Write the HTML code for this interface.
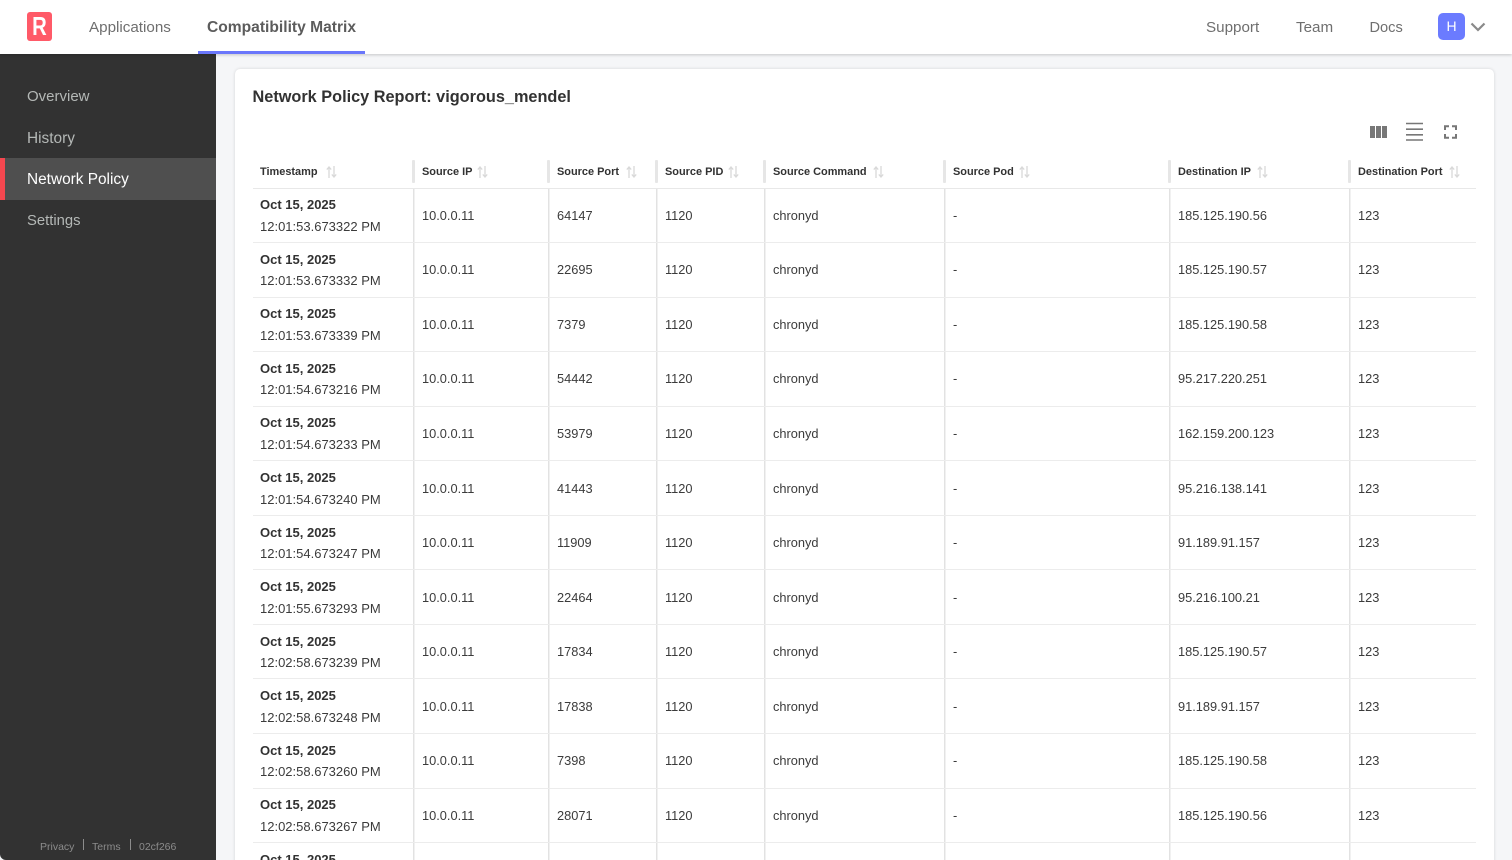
<!DOCTYPE html>
<html><head><meta charset="utf-8"><title>Network Policy</title>
<style>
*{box-sizing:border-box}
html,body{margin:0;padding:0;width:1512px;height:860px;overflow:hidden;background:#f5f6f8;font-family:"Liberation Sans",sans-serif}
#wrap{position:relative;width:1512px;height:860px;overflow:hidden;background:#f5f6f8}
.abs,.n{position:absolute}
#top{position:absolute;left:0;top:0;width:1512px;height:54px;background:#fff;box-shadow:0 1px 3px rgba(0,0,0,.2);z-index:5}
.n{top:18px;font-size:15.2px;line-height:20px;color:#6f6f6f;white-space:nowrap}
#side{position:absolute;left:0;top:54px;width:216px;height:806px;background:#323232;border-bottom-left-radius:6px;z-index:3}
.s{position:absolute;left:27px;font-size:15px;line-height:20px;color:#b4b8b6;white-space:nowrap}
#act{position:absolute;left:0;top:104px;width:216px;height:42px;background:#4f4f4f;border-left:5px solid #f4474f}
.f{position:absolute;top:786px;font-size:10.5px;line-height:14px;color:#8c8c8c;white-space:nowrap}
.fs{position:absolute;top:785px;width:1px;height:11px;background:#8c8c8c}
#card{position:absolute;left:235px;top:69px;width:1259px;height:800px;background:#fff;border-radius:5px;box-shadow:0 0 3px rgba(0,0,0,.14)}
h1{position:absolute;left:252.5px;top:87px;margin:0;font-size:16.3px;line-height:21px;font-weight:700;color:#323232;white-space:nowrap}
table{position:absolute;left:253px;top:155px;width:1223px;border-collapse:collapse;table-layout:fixed;color:#323232}
th{height:33px;padding:2px 0 0 7px;text-align:left;font-size:10.95px;font-weight:700;white-space:nowrap;position:relative;border-bottom:1px solid #e8e8e8;color:#323232;vertical-align:middle}
th+th{padding-left:9px}
th+th:before{content:"";position:absolute;left:-1px;top:5px;width:3px;height:23px;background:#e6e6e6;border-radius:1px}
th svg{margin-left:6px;vertical-align:-3px}
th:nth-child(1) svg{margin-left:8px}
th:nth-child(2) svg{margin-left:5px}
th:nth-child(3) svg{margin-left:7px}
th:nth-child(4) svg{margin-left:5px}
th:nth-child(6) svg{margin-left:5px}
th:nth-child(8) svg{margin-left:7px}
td{height:54.55px;padding:0 0 0 9px;font-size:12.8px;border-bottom:1px solid #ececec;color:#3b3b3b;vertical-align:middle;white-space:nowrap}
td+td{box-shadow:inset 1px 0 #e2e2e2,inset 2px 0 #f1f1f1}
td:first-child{padding-left:7px;font-size:13px;line-height:21.5px;padding-top:1px}
td b{color:#323232;display:block}
</style></head><body><div id="wrap">
<svg width="0" height="0" style="position:absolute"><symbol id="so" viewBox="0 0 11 12"><path d="M3 12V1.6M.8 3.6 3 1l2.2 2.6M8 0v10.4M5.8 8.4 8 11l2.2-2.6" fill="none" stroke="#d9d9d9" stroke-width="1.3"/></symbol></svg>
<div id="top">
<div class="abs" style="left:27px;top:12px;width:25px;height:29px;background:#ff5a68;border-radius:3px;color:#fff;font-weight:700;font-size:26px;line-height:29px;text-align:center"><span style="display:inline-block;transform:scaleX(.78)">R</span></div>
<div class="n" style="left:89px">Applications</div>
<div class="n" style="left:207px;font-weight:700;color:#5c5c5c;font-size:15.6px">Compatibility Matrix</div>
<div class="abs" style="left:198px;top:51px;width:167px;height:3px;background:#6a77fb"></div>
<div class="n" style="left:1206px">Support</div>
<div class="n" style="left:1296px">Team</div>
<div class="n" style="left:1369.5px;font-size:14.6px">Docs</div>
<div class="abs" style="left:1438px;top:13px;width:27px;height:27px;background:#6b7bff;border-radius:5px;color:#fff;font-size:14px;line-height:27px;text-align:center">H</div>
<svg class="abs" style="left:1470px;top:22px" width="16" height="10"><path d="M1.5 1.5 8 8l6.5-6.5" fill="none" stroke="#8a8a8a" stroke-width="2.2"/></svg>
</div>
<div id="side">
<div id="act"></div>
<div class="s" style="top:33px">Overview</div>
<div class="s" style="top:74.5px;font-size:15.4px">History</div>
<div class="s" style="top:116px;color:#fff;font-size:15.4px">Network Policy</div>
<div class="s" style="top:157px;font-size:14.8px">Settings</div>
<div class="f" style="left:40px">Privacy</div><div class="fs" style="left:83px"></div>
<div class="f" style="left:92px">Terms</div><div class="fs" style="left:130px"></div>
<div class="f" style="left:139px">02cf266</div>
</div>
<div id="card"></div>
<h1>Network Policy Report: vigorous_mendel</h1>
<svg class="abs" style="left:1370px;top:126px" width="17" height="12"><path d="M0 0h5v12H0zM6 0h5v12H6zM12 0h5v12h-5z" fill="#777"/></svg>
<svg class="abs" style="left:1406px;top:122px" width="17" height="19"><path d="M0 1.5h17M0 7.2h17M0 12.8h17M0 18h17" stroke="#777" stroke-width="1.6"/></svg>
<svg class="abs" style="left:1444px;top:125px" width="13" height="14"><path d="M1 5V1.2h4M8 1.2h4V5M12 9v3.8H8M5 12.8H1V9" fill="none" stroke="#777" stroke-width="2"/></svg>
<table>
<colgroup><col style="width:160px"><col style="width:135px"><col style="width:108px"><col style="width:108px"><col style="width:180px"><col style="width:225px"><col style="width:180px"><col style="width:127px"></colgroup>
<tr><th>Timestamp<svg width="11" height="12"><use href="#so"/></svg></th><th>Source IP<svg width="11" height="12"><use href="#so"/></svg></th><th>Source Port<svg width="11" height="12"><use href="#so"/></svg></th><th>Source PID<svg width="11" height="12"><use href="#so"/></svg></th><th>Source Command<svg width="11" height="12"><use href="#so"/></svg></th><th>Source Pod<svg width="11" height="12"><use href="#so"/></svg></th><th>Destination IP<svg width="11" height="12"><use href="#so"/></svg></th><th>Destination Port<svg width="11" height="12"><use href="#so"/></svg></th></tr>
<tr><td><b>Oct 15, 2025</b>12:01:53.673322 PM</td><td>10.0.0.11</td><td>64147</td><td>1120</td><td>chronyd</td><td>-</td><td>185.125.190.56</td><td>123</td></tr>
<tr><td><b>Oct 15, 2025</b>12:01:53.673332 PM</td><td>10.0.0.11</td><td>22695</td><td>1120</td><td>chronyd</td><td>-</td><td>185.125.190.57</td><td>123</td></tr>
<tr><td><b>Oct 15, 2025</b>12:01:53.673339 PM</td><td>10.0.0.11</td><td>7379</td><td>1120</td><td>chronyd</td><td>-</td><td>185.125.190.58</td><td>123</td></tr>
<tr><td><b>Oct 15, 2025</b>12:01:54.673216 PM</td><td>10.0.0.11</td><td>54442</td><td>1120</td><td>chronyd</td><td>-</td><td>95.217.220.251</td><td>123</td></tr>
<tr><td><b>Oct 15, 2025</b>12:01:54.673233 PM</td><td>10.0.0.11</td><td>53979</td><td>1120</td><td>chronyd</td><td>-</td><td>162.159.200.123</td><td>123</td></tr>
<tr><td><b>Oct 15, 2025</b>12:01:54.673240 PM</td><td>10.0.0.11</td><td>41443</td><td>1120</td><td>chronyd</td><td>-</td><td>95.216.138.141</td><td>123</td></tr>
<tr><td><b>Oct 15, 2025</b>12:01:54.673247 PM</td><td>10.0.0.11</td><td>11909</td><td>1120</td><td>chronyd</td><td>-</td><td>91.189.91.157</td><td>123</td></tr>
<tr><td><b>Oct 15, 2025</b>12:01:55.673293 PM</td><td>10.0.0.11</td><td>22464</td><td>1120</td><td>chronyd</td><td>-</td><td>95.216.100.21</td><td>123</td></tr>
<tr><td><b>Oct 15, 2025</b>12:02:58.673239 PM</td><td>10.0.0.11</td><td>17834</td><td>1120</td><td>chronyd</td><td>-</td><td>185.125.190.57</td><td>123</td></tr>
<tr><td><b>Oct 15, 2025</b>12:02:58.673248 PM</td><td>10.0.0.11</td><td>17838</td><td>1120</td><td>chronyd</td><td>-</td><td>91.189.91.157</td><td>123</td></tr>
<tr><td><b>Oct 15, 2025</b>12:02:58.673260 PM</td><td>10.0.0.11</td><td>7398</td><td>1120</td><td>chronyd</td><td>-</td><td>185.125.190.58</td><td>123</td></tr>
<tr><td><b>Oct 15, 2025</b>12:02:58.673267 PM</td><td>10.0.0.11</td><td>28071</td><td>1120</td><td>chronyd</td><td>-</td><td>185.125.190.56</td><td>123</td></tr>
<tr><td><b>Oct 15, 2025</b><br></td><td></td><td></td><td></td><td></td><td></td><td></td><td></td></tr>
</table>
</div></body></html>
